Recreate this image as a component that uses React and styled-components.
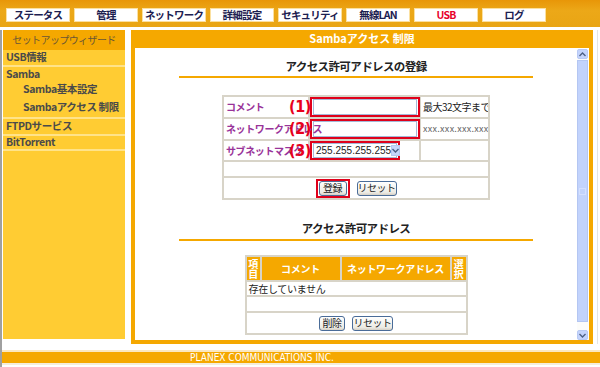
import React from 'react'
import styled, { createGlobalStyle } from 'styled-components'

const Global = createGlobalStyle`
  html, body { margin: 0; padding: 0; background: #fff; }
  body { font-family: "Noto Sans CJK JP", "Noto Sans", sans-serif; font-size: 11px; line-height: 1.2; color: #333; }
`

const orange = '#f5a800'

const Page = styled.div`
  width: 600px;
  height: 367px;
  overflow: hidden;
  display: flex;
  flex-direction: column;
`

const TopBar = styled.div`
  height: 27px;
  flex-shrink: 0;
  box-sizing: border-box;
  padding: 8px 0 0 6px;
  display: flex;
  gap: 4px;
  background: linear-gradient(#e89608, #eca818 40%, #e9a514);
`

const Tab = styled.div`
  width: 64px;
  height: 14px;
  box-sizing: border-box;
  background: #fff;
  border: 1px solid #fbe0a0;
  display: flex;
  align-items: center;
  justify-content: center;
  font-size: 10.5px;
  font-weight: bold;
  letter-spacing: -0.8px;
  color: ${p => (p.$active ? '#e8002a' : '#1c2050')};
`

const Body = styled.div`
  flex: 1;
  margin-top: 3px;
  border-left: 2px solid #a0a0a0;
  display: flex;
  flex-direction: column;
`

const MainRow = styled.div`
  display: flex;
  width: 596px;
  box-sizing: border-box;
  border-right: 1px solid #e4e4e4;
  padding-left: 1px;
  gap: 6px;
`

const Sidebar = styled.div`
  width: 122px;
  height: 309px;
  background: #ffcc33;
  display: flex;
  flex-direction: column;
`

const SideHead = styled.div`
  height: 20px;
  background: ${orange};
  display: flex;
  align-items: center;
  justify-content: center;
  color: #6a5634;
  font-size: 10px;
  letter-spacing: -0.6px;
`

const SideItem = styled.div`
  height: ${p => p.$h || 15}px;
  display: flex;
  align-items: center;
  padding-left: ${p => (p.$sub ? 20 : 3)}px;
  font-weight: bold;
  font-size: 10.5px;
  color: #4a4a4a;
  letter-spacing: -0.4px;
  border-bottom: ${p => (p.$sep ? '2px solid #ffe38a' : 'none')};
`

const Panel = styled.div`
  width: 462px;
  height: 314px;
  box-sizing: border-box;
  border: 4px solid ${orange};
  border-top: none;
  display: flex;
  flex-direction: column;
  overflow: hidden;
`

const PanelHead = styled.div`
  height: 18px;
  flex-shrink: 0;
  margin: 0 -4px;
  background: ${orange};
  color: #fff;
  font-weight: bold;
  font-size: 11px;
  display: flex;
  align-items: center;
  justify-content: center;
`

const PanelInner = styled.div`
  flex: 1;
  min-height: 0;
  display: flex;
  background: #fff;
`

const Content = styled.div`
  flex: 1;
  display: flex;
  flex-direction: column;
  align-items: center;
`

const Heading = styled.div`
  margin-top: ${p => p.$mt}px;
  height: 14px;
  line-height: 14px;
  font-weight: bold;
  font-size: 11.5px;
  color: #222;
  letter-spacing: -0.6px;
`

const Rule = styled.div`
  width: 354px;
  height: 2px;
  background: ${orange};
  margin-top: ${p => p.$mt}px;
`

const Table = styled.table`
  margin-top: ${p => p.$mt}px;
  width: ${p => p.$w}px;
  border-collapse: collapse;
  table-layout: fixed;
  border: 2px solid #d4d0c4;
  line-height: 12px;
  td, th { border: 2px solid #d8d4c8; padding: 0; }
`

const Row = styled.tr`
  height: ${p => p.$h}px;
`

const LabelCell = styled.td`
  position: relative;
  color: #993399;
  font-weight: bold;
  font-size: 10px;
  padding-left: 2px !important;
  white-space: nowrap;
  overflow: visible;
  letter-spacing: -0.4px;
`

const Num = styled.span`
  position: absolute;
  right: -3px;
  top: 50%;
  transform: translateY(-52%);
  font-family: "DejaVu Sans Condensed", "DejaVu Sans", sans-serif;
  font-weight: bold;
  font-size: 16px;
  color: #e8001c;
  line-height: 18px;
`

const Mark = styled.div`
  display: inline-flex;
  vertical-align: middle;
  border: 2px solid #e0001a;
  padding: 0 1px;
`

const TextBox = styled.div`
  width: 102px;
  height: 14px;
  border: 1px solid #a4b9d8;
  background: #fff;
`

const Select = styled.div`
  width: 80px;
  height: 13px;
  border: 1px solid #a4b9d8;
  background: #fff;
  display: flex;
  align-items: center;
  font-family: "Liberation Sans", Arial, sans-serif;
  font-size: 10px;
  color: #222;
  padding-left: 2px;
`

const SelectArrow = styled.div`
  margin-left: auto;
  width: 12px;
  height: 11px;
  margin-right: 1px;
  background: #c6d6fb;
  border: 1px solid #b6c8f0;
  box-sizing: border-box;
  display: flex;
  align-items: center;
  justify-content: center;
`

const Note = styled.td`
  font-size: ${p => (p.$mono ? 9 : 10)}px;
  color: ${p => (p.$mono ? '#666' : '#222')};
  padding-left: 2px !important;
  white-space: nowrap;
  overflow: hidden;
  letter-spacing: ${p => (p.$mono ? '0.3px' : '-0.5px')};
`

const ButtonCell = styled.td`
  text-align: center;
`

const Buttons = styled.div`
  display: flex;
  justify-content: center;
  align-items: center;
  gap: 7px;
`

const Button = styled.div`
  width: ${p => p.$w}px;
  height: 13px;
  border: 1px solid #4a6c98;
  border-radius: 3px;
  background: linear-gradient(#ffffff, #ecebe4 80%, #d6d0c5);
  display: flex;
  align-items: center;
  justify-content: center;
  font-size: 10px;
  color: #222;
  letter-spacing: -0.5px;
`

const HeadCell = styled.th`
  background: ${orange};
  color: #fff;
  font-weight: bold;
  font-size: 10px;
  line-height: 10px;
  letter-spacing: -0.3px;
  overflow: hidden;
`

const Cell = styled.td`
  font-size: 10px;
  color: #222;
  padding-left: 2px !important;
  letter-spacing: -0.3px;
`

const Scroll = styled.div`
  width: 11px;
  margin: 1px 1px 0 0;
  display: flex;
  flex-direction: column;
  background: #fcfcfa;
`

const ScrollBtn = styled.div`
  height: 10px;
  flex-shrink: 0;
  background: #c4d4fc;
  border: 1px solid #b8c9f4;
  border-radius: 2px;
  box-sizing: border-box;
  display: flex;
  align-items: center;
  justify-content: center;
`

const Thumb = styled.div`
  height: 262px;
  flex-shrink: 0;
  margin-top: 1px;
  background: #c2d3fc;
  border: 1px solid #b4c6f2;
  box-sizing: border-box;
  display: flex;
  align-items: center;
  justify-content: center;
`

const Grip = styled.div`
  width: 5px;
  height: 5px;
  border: 1px solid #d4e0ff;
`

const Track = styled.div`
  flex: 1;
`

const Footer = styled.div`
  margin-top: 6px;
  border-top: 2px solid #fbe8c0;
  height: 11px;
  background: ${orange};
  color: #fff;
  font-family: "DejaVu Sans Condensed", "DejaVu Sans", sans-serif;
  font-size: 10px;
  line-height: 11px;
  text-align: center;
  padding-right: 78px;
  border-bottom: 2px solid #f4eedc;
`

const Chevron = ({ down }) => (
  <svg width="7" height="5" viewBox="0 0 7 5">
    <path d={down ? 'M0.5 1 L3.5 4 L6.5 1' : 'M0.5 4 L3.5 1 L6.5 4'} fill="none" stroke="#4d6185" strokeWidth="1.4" />
  </svg>
)

const tabs = ['ステータス', '管理', 'ネットワーク', '詳細設定', 'セキュリティ', '無線LAN', 'USB', 'ログ']

export default function App() {
  return (
    <Page>
      <Global />
      <TopBar>
        {tabs.map(t => (
          <Tab key={t} $active={t === 'USB'}>{t}</Tab>
        ))}
      </TopBar>
      <Body>
        <MainRow>
          <Sidebar>
            <SideHead>セットアップウィザード</SideHead>
            <SideItem $sep>USB情報</SideItem>
            <SideItem $h={14}>Samba</SideItem>
            <SideItem $sub $h={17}>Samba基本設定</SideItem>
            <SideItem $sub $h={19} $sep>Sambaアクセス 制限</SideItem>
            <SideItem $h={15} $sep>FTPDサービス</SideItem>
            <SideItem $h={13} $sep>BitTorrent</SideItem>
          </Sidebar>
          <Panel>
            <PanelHead>Sambaアクセス 制限</PanelHead>
            <PanelInner>
              <Content>
                <Heading $mt={11}>アクセス許可アドレスの登録</Heading>
                <Rule $mt={3} />
                <Table $mt={17} $w={266}>
                  <colgroup>
                    <col style={{ width: 86 }} />
                    <col style={{ width: 111 }} />
                    <col style={{ width: 69 }} />
                  </colgroup>
                  <tbody>
                    <Row $h={22}>
                      <LabelCell>コメント<Num>(1)</Num></LabelCell>
                      <td><Mark><TextBox /></Mark></td>
                      <Note>最大32文字まで</Note>
                    </Row>
                    <Row $h={22}>
                      <LabelCell>ネットワークアドレス<Num>(2)</Num></LabelCell>
                      <td><Mark><TextBox /></Mark></td>
                      <Note $mono>xxx.xxx.xxx.xxx</Note>
                    </Row>
                    <Row $h={20}>
                      <LabelCell>サブネットマスク<Num>(3)</Num></LabelCell>
                      <td>
                        <Mark>
                          <Select>
                            255.255.255.255
                            <SelectArrow><Chevron down /></SelectArrow>
                          </Select>
                        </Mark>
                      </td>
                      <td />
                    </Row>
                    <Row $h={16}><td colSpan={3} /></Row>
                    <Row $h={22}>
                      <ButtonCell colSpan={3}>
                        <Buttons>
                          <Mark><Button $w={26}>登録</Button></Mark>
                          <Button $w={38}>リセット</Button>
                        </Buttons>
                      </ButtonCell>
                    </Row>
                  </tbody>
                </Table>
                <Heading $mt={21}>アクセス許可アドレス</Heading>
                <Rule $mt={4} />
                <Table $mt={14} $w={221}>
                  <colgroup>
                    <col style={{ width: 15 }} />
                    <col style={{ width: 80 }} />
                    <col style={{ width: 110 }} />
                    <col style={{ width: 16 }} />
                  </colgroup>
                  <tbody>
                    <Row $h={25}>
                      <HeadCell>項<br />目</HeadCell>
                      <HeadCell>コメント</HeadCell>
                      <HeadCell>ネットワークアドレス</HeadCell>
                      <HeadCell>選<br />択</HeadCell>
                    </Row>
                    <Row $h={15}><Cell colSpan={4}>存在していません</Cell></Row>
                    <Row $h={16}><Cell colSpan={4} /></Row>
                    <Row $h={22}>
                      <ButtonCell colSpan={4}>
                        <Buttons>
                          <Button $w={24}>削除</Button>
                          <Button $w={39}>リセット</Button>
                        </Buttons>
                      </ButtonCell>
                    </Row>
                  </tbody>
                </Table>
              </Content>
              <Scroll>
                <ScrollBtn><Chevron /></ScrollBtn>
                <Thumb><Grip /></Thumb>
                <Track />
                <ScrollBtn><Chevron down /></ScrollBtn>
              </Scroll>
            </PanelInner>
          </Panel>
        </MainRow>
        <Footer>PLANEX COMMUNICATIONS INC.</Footer>
      </Body>
    </Page>
  )
}
